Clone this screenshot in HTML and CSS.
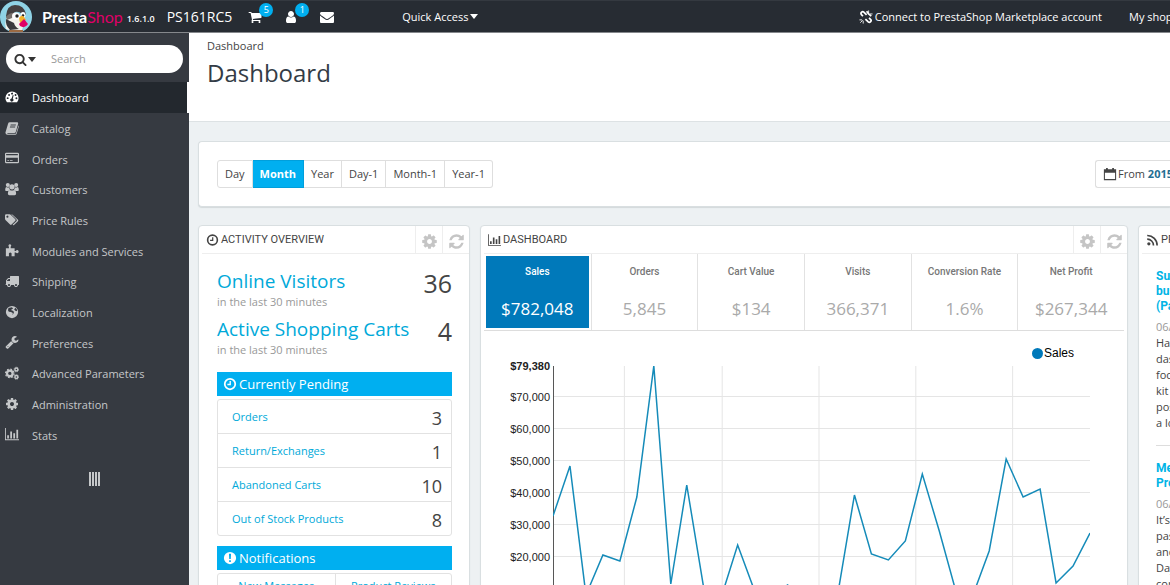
FILE: index.html
```html
<!DOCTYPE html>
<html lang="en">
<head>
<meta charset="utf-8">
<meta name="viewport" content="width=device-width, initial-scale=1">
<title>Dashboard - PrestaShop</title>
<link rel="stylesheet" href="styles.css">
</head>
<body>
<svg class="sprite" aria-hidden="true">
  <symbol id="search" viewBox="0 0 1792 1792"><path d="M1216 832q0-185-131.5-316.5t-316.5-131.5-316.5 131.5-131.5 316.5 131.5 316.5 316.5 131.5 316.5-131.5 131.5-316.5zm512 832q0 52-38 90t-90 38q-54 0-90-38l-343-342q-179 124-399 124-143 0-273.5-55.5t-225-150-150-225-55.5-273.5 55.5-273.5 150-225 225-150 273.5-55.5 273.5 55.5 225 150 150 225 55.5 273.5q0 220-124 399l343 343q37 37 37 90z"/></symbol>
  <symbol id="cog" viewBox="0 0 1792 1792"><path d="M1152 896q0-106-75-181t-181-75-181 75-75 181 75 181 181 75 181-75 75-181zm512-109v222q0 12-8 23t-20 13l-185 28q-19 54-39 91 35 50 107 138 10 12 10 25t-9 23q-27 37-99 108t-94 71q-12 0-26-9l-138-108q-44 23-91 38-16 136-29 186-7 28-36 28h-222q-14 0-24.5-8.5t-11.5-21.5l-28-184q-49-16-90-37l-141 107q-10 9-25 9-14 0-25-11-126-114-165-168-7-10-7-23 0-12 8-23 15-21 51-66.5t54-70.5q-27-50-41-99l-183-27q-13-2-21-12.5t-8-23.5v-222q0-12 8-23t19-13l186-28q14-46 39-92-40-57-107-138-10-12-10-24 0-10 9-23 26-36 98.500-107.500t94.500-71.500q13 0 26 10l138 107q44-23 91-38 16-136 29-186 7-28 36-28h222q14 0 24.500 8.500t11.500 21.500l28 184q49 16 90 37l142-107q9-9 24-9 13 0 25 10 129 119 165 170 7 8 7 22 0 12-8 23-15 21-51 66.500t-54 70.500q26 50 41 98l183 28q13 2 21 12.500t8 23.500z"/></symbol>
  <symbol id="refresh" viewBox="0 0 1792 1792"><path d="M1639 1056q0 5-1 7-64 268-268 434.500t-478 166.500q-146 0-282.500-55t-243.500-157l-129 129q-19 19-45 19t-45-19-19-45v-448q0-26 19-45t45-19h448q26 0 45 19t19 45-19 45l-137 137q71 66 161 102t187 36q134 0 250-65t186-179q11-17 53-117 8-23 30-23h192q13 0 22.500 9.500t9.500 22.500zm25-800v448q0 26-19 45t-45 19h-448q-26 0-45-19t-19-45 19-45l138-138q-148-137-349-137-134 0-250 65t-186 179q-11 17-53 117-8 23-30 23h-199q-13 0-22.500-9.500t-9.500-22.500v-7q65-268 270-434.500t480-166.500q146 0 284 55.500t245 156.500l130-129q19-19 45-19t45 19 19 45z"/></symbol>
  <symbol id="cart" viewBox="0 0 1792 1792"><path d="M704 1536q0 52-38 90t-90 38-90-38-38-90 38-90 90-38 90 38 38 90zm896 0q0 52-38 90t-90 38-90-38-38-90 38-90 90-38 90 38 38 90zm128-1088v512q0 24-16.500 42.500t-40.500 21.500l-1044 122q13 60 13 70 0 16-24 64h920q26 0 45 19t19 45-19 45-45 19h-1024q-26 0-45-19t-19-45q0-11 8-31.500t16-36 21.500-40 15.500-29.500l-177-823h-204q-26 0-45-19t-19-45 19-45 45-19h256q16 0 28.500 6.500t19.500 15.500 13 24.500 8 26 5.500 29.500 4.500 26h1201q26 0 45 19t19 45z"/></symbol>
  <symbol id="user" viewBox="0 0 1792 1792"><path d="M1536 1399q0 109-62.500 187t-150.500 78h-854q-88 0-150.500-78t-62.500-187q0-85 8.500-160.500t31.500-152 58.500-131 94-89 134.500-34.500q131 128 313 128t313-128q76 0 134.500 34.500t94 89 58.500 131 31.500 152 8.500 160.500zm-256-887q0 159-112.500 271.500t-271.500 112.500-271.500-112.500-112.500-271.500 112.500-271.500 271.500-112.500 271.500 112.500 112.500 271.500z"/></symbol>
  <symbol id="mail" viewBox="0 0 1792 1792"><path d="M1792 710v794q0 66-47 113t-113 47h-1472q-66 0-113-47t-47-113v-794q44 49 101 87 362 246 497 345 57 42 92.500 65.500t94.500 48 110 24.500h2q51 0 110-24.500t94.500-48 92.500-65.500q170-123 498-345 57-39 100-87zm0-294q0 79-49 151t-122 123q-376 261-468 325-10 7-42.500 31t-54 38.500-52 32.500-57.500 27-50 9h-2q-23 0-50-9t-57.500-27-52-32.500-54-38.500-42.500-31q-91-64-262-182.500t-205-142.500q-62-42-117-115.500t-55-136.500q0-78 41.500-130t118.500-52h1472q65 0 112.500 47t47.500 113z"/></symbol>
  <symbol id="wrench" viewBox="0 0 1792 1792"><path d="M448 1472q0-26-19-45t-45-19-45 19-19 45 19 45 45 19 45-19 19-45zm644-420l-682 682q-37 37-90 37-52 0-91-37l-106-108q-38-36-38-90 0-53 38-91l681-681q39 98 114.500 173.500t173.500 114.500zm634-435q0 39-23 106-47 134-164.500 217.500t-258.500 83.500q-185 0-316.500-131.500t-131.500-316.500 131.500-316.500 316.500-131.500q58 0 121.500 16.500t107.500 46.500q16 11 16 28t-16 28l-293 169v224l193 107q5-3 79-48.500t135.500-81 70.500-35.500q15 0 23.500 10t8.500 25z"/></symbol>
  <symbol id="truck" viewBox="0 0 1792 1792"><path d="M640 1408q0-52-38-90t-90-38-90 38-38 90 38 90 90 38 90-38 38-90zm-384-512h384v-256h-158q-13 0-22 9l-195 195q-9 9-9 22v30zm1280 512q0-52-38-90t-90-38-90 38-38 90 38 90 90 38 90-38 38-90zm256-1088v1024q0 15-4 26.500t-13.500 18.500-16.500 11.500-23.500 6-22.500 2-25.500 0-22.500-.5q0 106-75 181t-181 75-181-75-75-181h-384q0 106-75 181t-181 75-181-75-75-181h-64q-3 0-22.500.5t-25.500 0-22.500-2-23.500-6-16.500-11.500-13.500-18.500-4-26.500q0-26 19-45t45-19v-320q0-8-.5-35t0-38 2.500-34.500 6.500-37 14-30.500 22.500-30l198-198q19-19 50.500-32t58.500-13h160v-192q0-26 19-45t45-19h1024q26 0 45 19t19 45z"/></symbol>
  <symbol id="gauge" viewBox="0 0 16 16"><path fill-rule="evenodd" d="M2.200 14A7.500 7.500 0 1 1 13.800 14zM3 8.200a1.100 1.100 0 1 0 .1 2.200A1.100 1.100 0 0 0 3 8.200zM4.600 4.600a1.100 1.100 0 1 0 .1 2.200 1.100 1.100 0 0 0-.1-2.200zM8 3a1.100 1.100 0 1 0 .1 2.200A1.100 1.100 0 0 0 8 3zM12 4.700a1.100 1.100 0 1 0 .1 2.200 1.100 1.100 0 0 0-.1-2.200zM13 8.300a1.100 1.100 0 1 0 .1 2.200 1.100 1.100 0 0 0-.1-2.200zM8.900 5.700 7.500 9.600a1.800 1.800 0 1 0 1.400.4L9.900 6z"/></symbol>
  <symbol id="book" viewBox="0 0 16 16"><path fill-rule="evenodd" d="M5.500 1.500H14q1.300.2 1 1.500l-2.700 9.500q-.3 1.200-1.600 1.200H3.300q-.8 0-.9.500.2.500 1 .5h8.400q.6 0 .8-.6L15.500 5q.6.5.3 1.400l-2.500 8.200q-.3 1.200-1.600 1.200H3Q.3 15.500.5 13L3.500 3q.4-1.400 2-1.500zM6.500 4l-.3 1h6l.3-1zM5.800 6.400l-.3 1h6l.3-1z"/></symbol>
  <symbol id="card" viewBox="0 0 16 16"><path fill-rule="evenodd" d="M1.500 2h13Q16 2 16 3.500v9q0 1.500-1.500 1.500h-13Q0 14 0 12.500v-9Q0 2 1.500 2zM1.300 3.300v1.500h13.400V3.300zM1.300 7.600v5h13.400v-5zM2.700 10.500h2v1h-2zm3 0h3v1h-3z"/></symbol>
  <symbol id="group" viewBox="0 0 16 16"><circle cx="3.200" cy="3.500" r="2.300"/><circle cx="12.800" cy="3.500" r="2.300"/><circle cx="8" cy="5.500" r="3"/><path d="M.2 9.200q0-3.200 1.500-3.400 1.500 1 3 .4.200 1.800 1.200 2.800-1.500 0-2.300 1.200H1.500Q.2 10.300.2 9.200zm15.600 0q0-3.200-1.500-3.400-1.500 1-3 .4-.2 1.800-1.200 2.800 1.500 0 2.300 1.200h2.100q1.300.1 1.300-1zM3.300 13.500q0-4.500 2.400-4.500 2.300 1.500 4.600 0 2.400 0 2.400 4.500 0 1.700-1.700 1.700H5q-1.700 0-1.700-1.700z"/></symbol>
  <symbol id="tags" viewBox="0 0 16 16"><path fill-rule="evenodd" d="M0 2.800Q0 1.500 1.300 1.500h3.800q1 0 1.700.7l5 5q.8.900 0 1.700l-4.300 4.300q-.8.800-1.700 0l-5-5Q0 7.500 0 6.500zm2.700.2a1.200 1.200 0 1 0 .1 2.400A1.200 1.200 0 0 0 2.700 3z"/><path d="M7 1.500q1.300 0 2 .7l5.800 5.500q.8.900 0 1.700l-4.500 4.300q-.8.700-1.600-.2l4.500-4.500q.8-1-.2-2z"/></symbol>
  <symbol id="puzzle" viewBox="0 0 16 16"><path d="M1 6h3.500V4.500Q3.200 2.500 5 1.400q2 0 2.200 1.400Q7 3.500 6.500 4.200V6H11v3h1.200q2-1.800 3.300.1.500 2.500-1.500 2.600-1 0-1.600-.8H11V15H7.500v-2Q8 11 6 10.800 4 11 4.500 13v2H1z"/></symbol>
  <symbol id="globe" viewBox="0 0 16 16"><path fill-rule="evenodd" d="M8 1a7 7 0 1 1 0 14A7 7 0 0 1 8 1zM4 3.500 3.400 6l1 1.600 2.400.4 2.200 1-.6 2.400L9.600 10l.7-2L9 6.600 7.200 6l.3-1.200 1.700-.6L8 2.600zM10.500 5l1.300 1.500 2 .5-.2-1.800-1.800-2z"/></symbol>
  <symbol id="cogs" viewBox="0 0 16 16"><g fill="none" stroke="currentColor"><circle cx="5.500" cy="8.500" r="3.200" stroke-width="2.600"/><circle cx="5.500" cy="8.500" r="4.900" stroke-width="1.400" stroke-dasharray="2 1.850"/><circle cx="13" cy="4" r="1.700" stroke-width="1.600"/><circle cx="13" cy="12.500" r="1.700" stroke-width="1.600"/><circle cx="13" cy="4" r="2.700" stroke-width=".8" stroke-dasharray="1.200 .9"/><circle cx="13" cy="12.500" r="2.700" stroke-width=".8" stroke-dasharray="1.200 .9"/></g></symbol>
  <symbol id="bars" viewBox="0 0 16 16"><path d="M0 1h1v13h15v1H0zM2.500 9.500h2V13h-2zM6 5h2v8H6zm3.500 2h2v6h-2zM13 3h2v10h-2z"/></symbol>
  <symbol id="clock" viewBox="0 0 16 16"><path fill-rule="evenodd" d="M8 1a7 7 0 1 1 0 14A7 7 0 0 1 8 1zm0 2a5 5 0 1 0 0 10A5 5 0 0 0 8 3z"/><path d="M7.500 4.500H9v4.800H5V7.800h2.500z"/></symbol>
  <symbol id="alert" viewBox="0 0 16 16"><path fill-rule="evenodd" d="M8 1a7 7 0 1 1 0 14A7 7 0 0 1 8 1zM6.800 3.200 7.100 9h1.800l.3-5.800zM7 10.500v2h2v-2z"/></symbol>
  <symbol id="calendar" viewBox="0 0 16 16"><path fill-rule="evenodd" d="M1 2.500h2.500V1h2v1.500h5V1h2v1.500H15V15H1zm1.200 4v7.300h11.600V6.500z"/></symbol>
  <symbol id="rss" viewBox="0 0 16 16"><circle cx="3.500" cy="12.700" r="2"/><path fill="none" stroke="currentColor" stroke-width="2" d="M1.500 7a7.500 7.500 0 0 1 7.700 7.700M1.500 2.500a12 12 0 0 1 12.200 12.200"/></symbol>
  <symbol id="unlink" viewBox="0 0 16 16"><path fill="none" stroke="currentColor" stroke-width="2" d="M4.500 7 2.800 5.300Q1.700 4 2.800 2.700 4.200 1.200 5.500 2.400l3.200 3.200M11.500 9l1.900 1.900q1 1.200-.1 2.500-1.400 1.300-2.700.1L7.300 10.300M8.700 1.500 11 4.500l3 2.500"/><path fill="none" stroke="currentColor" d="M11 .5v3M15.500 4.500h-3M4.800 12.300v3.200M.5 11.300h3M4.200 11.800l-2.700 2.700"/></symbol>
</svg>

<header class="topbar">
  <svg class="logo" viewBox="0 0 32 32" role="img" aria-label="PrestaShop">
    <circle cx="16" cy="16" r="16" fill="#8fd3e6"/>
    <path fill="#f4f3ee" d="M6 28Q4 20 8 15l12-1 5 5-3 10H9z"/>
    <path fill="#454142" d="M6 15Q7 4 15 4q9 0 11 9l-2 2q-4-5-9-4l-8 6z"/>
    <path fill="#77706c" d="M6 16q4-5 10-4l-4 5-5 2z"/>
    <ellipse cx="16" cy="15" rx="4" ry="3.500" fill="#fff"/>
    <ellipse cx="23" cy="14" rx="2.500" ry="3" fill="#fff"/>
    <circle cx="17" cy="15" r="1.700" fill="#222"/>
    <circle cx="23" cy="14.500" r="1.300" fill="#222"/>
    <path fill="#f4b229" d="M19 17q3-4 5-1l2 3-6 3z"/>
    <path fill="#df0067" d="m19 23 5-5 4 5q-3 5-8 2z"/>
    <path fill="#39393d" d="m6 18 8 4q1 4 5 6l-9 1q-5-5-4-11z"/>
    <path fill="#9b6a43" d="M9 29h14v2H9z"/>
  </svg>
  <a class="brand" href="#">Presta<span class="brand-accent">Shop</span></a>
  <span class="version">1.6.1.0</span>
  <a class="shop-name" href="#">PS161RC5</a>
  <nav class="alerts" aria-label="Notifications">
    <a class="alert-link" href="#" aria-label="New orders"><svg class="icon"><use href="#cart"/></svg><span class="badge">5</span></a>
    <a class="alert-link" href="#" aria-label="New customers"><svg class="icon"><use href="#user"/></svg><span class="badge">1</span></a>
    <a class="alert-link" href="#" aria-label="Messages"><svg class="icon"><use href="#mail"/></svg></a>
  </nav>
  <button class="quick" type="button">Quick Access<span class="caret"></span></button>
  <a class="connect" href="#"><svg class="icon"><use href="#unlink"/></svg>Connect to PrestaShop Marketplace account</a>
  <a class="my-shop" href="#">My shop</a>
</header>

<div class="layout">
  <aside class="sidebar">
    <form class="search">
      <button class="search-type" type="button" aria-label="Search in"><svg class="icon"><use href="#search"/></svg><span class="caret"></span></button>
      <input class="search-input" type="text" placeholder="Search" aria-label="Search">
    </form>
    <nav class="menu" aria-label="Main">
      <a class="menu-item active" href="#"><svg class="icon"><use href="#gauge"/></svg>Dashboard</a>
      <a class="menu-item" href="#"><svg class="icon"><use href="#book"/></svg>Catalog</a>
      <a class="menu-item" href="#"><svg class="icon"><use href="#card"/></svg>Orders</a>
      <a class="menu-item" href="#"><svg class="icon"><use href="#group"/></svg>Customers</a>
      <a class="menu-item" href="#"><svg class="icon"><use href="#tags"/></svg>Price Rules</a>
      <a class="menu-item" href="#"><svg class="icon"><use href="#puzzle"/></svg>Modules and Services</a>
      <a class="menu-item" href="#"><svg class="icon"><use href="#truck"/></svg>Shipping</a>
      <a class="menu-item" href="#"><svg class="icon"><use href="#globe"/></svg>Localization</a>
      <a class="menu-item" href="#"><svg class="icon"><use href="#wrench"/></svg>Preferences</a>
      <a class="menu-item" href="#"><svg class="icon"><use href="#cogs"/></svg>Advanced Parameters</a>
      <a class="menu-item" href="#"><svg class="icon"><use href="#cog"/></svg>Administration</a>
      <a class="menu-item" href="#"><svg class="icon"><use href="#bars"/></svg>Stats</a>
    </nav>
    <button class="collapse" type="button" aria-label="Collapse menu"><svg width="11" height="14" viewBox="0 0 11 14"><path d="M0 0h2v14H0zM3 0h2v14H3zM6 0h2v14H6zM9 0h2v14H9z"/></svg></button>
  </aside>

  <main class="main">
    <div class="page-head">
      <div class="crumb">Dashboard</div>
      <h1 class="title">Dashboard</h1>
    </div>
    <div class="content">
      <section class="panel filter">
        <div class="range">
          <button class="range-btn" type="button">Day</button>
          <button class="range-btn on" type="button">Month</button>
          <button class="range-btn" type="button">Year</button>
          <button class="range-btn" type="button">Day-1</button>
          <button class="range-btn" type="button">Month-1</button>
          <button class="range-btn" type="button">Year-1</button>
        </div>
        <button class="date" type="button"><svg class="icon"><use href="#calendar"/></svg><span>From <b>2015</b></span></button>
      </section>

      <div class="columns">
        <section class="panel">
          <div class="panel-head">
            <h2 class="panel-title"><svg class="icon"><use href="#clock"/></svg>ACTIVITY OVERVIEW</h2>
            <button class="tool" type="button" aria-label="Configure"><svg class="icon"><use href="#cog"/></svg></button>
            <button class="tool" type="button" aria-label="Refresh"><svg class="icon"><use href="#refresh"/></svg></button>
          </div>
          <div class="activity">
            <div class="stat">
              <div><a class="stat-link" href="#">Online Visitors</a><div class="stat-note">in the last 30 minutes</div></div>
              <span class="stat-value">36</span>
            </div>
            <div class="stat">
              <div><a class="stat-link" href="#">Active Shopping Carts</a><div class="stat-note">in the last 30 minutes</div></div>
              <span class="stat-value">4</span>
            </div>
            <h3 class="bar"><svg class="icon"><use href="#clock"/></svg>Currently Pending</h3>
            <div class="list">
              <div class="row"><a href="#">Orders</a><span class="count">3</span></div>
              <div class="row"><a href="#">Return/Exchanges</a><span class="count">1</span></div>
              <div class="row"><a href="#">Abandoned Carts</a><span class="count">10</span></div>
              <div class="row"><a href="#">Out of Stock Products</a><span class="count">8</span></div>
            </div>
            <h3 class="bar"><svg class="icon"><use href="#alert"/></svg>Notifications</h3>
            <div class="list pair"><a href="#">New Messages</a><a href="#">Product Reviews</a></div>
          </div>
        </section>

        <section class="panel">
          <div class="panel-head">
            <h2 class="panel-title"><svg class="icon"><use href="#bars"/></svg>DASHBOARD</h2>
            <button class="tool" type="button" aria-label="Configure"><svg class="icon"><use href="#cog"/></svg></button>
            <button class="tool" type="button" aria-label="Refresh"><svg class="icon"><use href="#refresh"/></svg></button>
          </div>
          <div class="metrics">
            <button class="metric on" type="button"><span class="metric-name">Sales</span><span class="metric-value">$782,048</span></button>
            <button class="metric" type="button"><span class="metric-name">Orders</span><span class="metric-value">5,845</span></button>
            <button class="metric" type="button"><span class="metric-name">Cart Value</span><span class="metric-value">$134</span></button>
            <button class="metric" type="button"><span class="metric-name">Visits</span><span class="metric-value">366,371</span></button>
            <button class="metric" type="button"><span class="metric-name">Conversion Rate</span><span class="metric-value">1.6%</span></button>
            <button class="metric" type="button"><span class="metric-name">Net Profit</span><span class="metric-value">$267,344</span></button>
          </div>
          <div class="legend"><span class="dot"></span>Sales</div>
          <div class="chart">
            <div class="ticks"><b>$79,380</b><span>$70,000</span><span>$60,000</span><span>$50,000</span><span>$40,000</span><span>$30,000</span><span>$20,000</span><span>$10,000</span></div>
            <svg class="plot" viewBox="0 0 538 256" preserveAspectRatio="none" role="img" aria-label="Sales by day">
              <path class="grid" d="M0 30.500h538M0 62.500h538M0 94.500h538M0 126.500h538M0 158.500h538M0 190.500h538M0 222.500h538M71.500 0v256M169.500 0v256M266.500 0v256M363.500 0v256M460.500 0v256"/>
              <path class="axis" d="M.5 0v256"/>
              <path class="line" d="M0 150 17 100 33 229 50 189 67 195 84 131 101 0 118 218 134 119 151 222 168 233 185 179 202 225 219 230 235 219 252 231 269 234 286 224 302 129 319 188 336 194 353 175 370 108 387 165 403 223 420 231 437 185 454 93 471 131 488 123 504 217 521 200 538 167"/>
            </svg>
          </div>
        </section>

        <section class="panel news">
          <div class="panel-head"><h2 class="panel-title"><svg class="icon"><use href="#rss"/></svg>PRESTASHOP</h2></div>
          <article class="post">
            <a class="post-title" href="#">Support<br>business<br>(Part</a>
            <div class="post-date">06/</div>
            <p class="post-text">Have<br>dashboard<br>focus<br>kit<br>possible<br>a look</p>
          </article>
          <article class="post">
            <a class="post-title" href="#">Meet<br>PrestaShop</a>
            <div class="post-date">06/</div>
            <p class="post-text">It’s<br>past<br>and<br>Day<br>commerce</p>
          </article>
        </section>
      </div>
    </div>
  </main>
</div>
</body>
</html>
```

FILE: styles.css
```css
* { box-sizing: border-box; }
html { overflow: hidden; }
body {
  margin: 0;
  height: 100vh;
  overflow: hidden;
  display: flex;
  flex-direction: column;
  font: 11px/16px "Open Sans", "Noto Sans", sans-serif;
  color: #444;
  background: #edf1f3;
}
a { color: inherit; text-decoration: none; }
button { font: inherit; color: inherit; background: none; border: 0; padding: 0; white-space: nowrap; cursor: pointer; }
h1, h2, h3, p { margin: 0; font-weight: 400; }
.sprite { position: absolute; width: 0; height: 0; }
.icon { width: 14px; height: 14px; fill: currentColor; flex: none; }
.caret { border: 4px solid transparent; border-top: 5px solid currentColor; border-bottom: 0; }

/* Top bar */
.topbar {
  flex: none;
  display: flex;
  align-items: center;
  height: 33px;
  color: #fff;
  background: #272c33;
  border-top: 1px solid #343940;
  border-bottom: 1px solid #85888c;
  white-space: nowrap;
  overflow: hidden;
}
.logo { width: 32px; height: 32px; flex: none; }
.brand { margin-left: 10px; font: 16px/20px Lato, "Open Sans", sans-serif; font-weight: 700; }
.brand-accent { color: #df0067; font-weight: 400; }
.version { margin: 4px 0 0 4px; font-size: 9px; font-weight: 600; }
.shop-name { margin-left: 12px; font-size: 14px; }
.alerts { display: flex; gap: 22px; margin-left: 16px; }
.alert-link { position: relative; display: flex; }
.badge {
  position: absolute;
  left: 11px;
  top: -7px;
  width: 14px;
  height: 14px;
  border-radius: 50%;
  background: #00aff0;
  font-size: 9px;
  line-height: 14px;
  text-align: center;
}
.quick { display: flex; align-items: center; gap: 2px; margin-left: 68px; }
.connect { display: flex; align-items: center; gap: 2px; margin-left: auto; }
.my-shop { flex: none; width: 41px; margin-left: 27px; overflow: hidden; }

/* Sidebar */
.layout { flex: 1; display: flex; min-height: 0; }
.sidebar { flex: none; width: 189px; color: #c5c7c9; background: #363a41; }
.search { display: flex; align-items: center; height: 28px; margin: 12px 6px 9px; padding: 0 8px; border-radius: 14px; background: #fff; }
.search-type { display: flex; align-items: center; gap: 1px; color: #333; }
.search-type .icon { width: 13px; height: 13px; }
.search-input { flex: 1; min-width: 0; margin-left: 15px; padding: 0; border: 0; outline: 0; background: none; font: inherit; }
.search-input::placeholder { color: #999; opacity: 1; }
.menu { display: flex; flex-direction: column; height: 368px; }
.menu-item { flex: 1; display: flex; align-items: center; gap: 13px; padding: 2px 0 0 5px; }
.menu-item .icon { margin-bottom: 3px; }
.menu-item.active { color: #fff; background: #23282e; border-right: 2px solid #fff; }
.collapse { display: block; margin: 22px auto 0; fill: #c5c7c9; }

/* Page head */
.main { flex: 1; min-width: 0; }
.page-head { height: 89px; padding: 5px 18px; background: #fff; border-bottom: 1px solid #dde2e4; }
.title { margin-top: 2px; font-size: 24px; line-height: 34px; color: #333c46; }
.content { padding: 19px 0 0 9px; }

/* Panels */
.panel { background: #fff; border: 1px solid #d9dfe1; border-radius: 4px; box-shadow: 0 1px 1px #d3d9db; }
.filter { display: flex; align-items: center; justify-content: space-between; height: 66px; padding-left: 18px; border-right: 0; border-radius: 4px 0 0 4px; }
.range { display: flex; }
.range-btn { height: 28px; padding: 0 7px; border: 1px solid #dedede; border-left-width: 0; }
.range-btn:first-child { border-left-width: 1px; border-radius: 3px 0 0 3px; }
.range-btn:last-child { border-radius: 0 3px 3px 0; }
.range-btn.on { color: #fff; font-weight: 700; background: #00aff0; border-color: #009fdc; }
.date { display: flex; align-items: center; gap: 1px; width: 75px; height: 28px; padding-left: 7px; border: 1px solid #dedede; border-right: 0; border-radius: 3px 0 0 3px; overflow: hidden; }
.date b { color: #246e92; }
.columns { display: grid; grid-template-columns: 272px minmax(0, 1fr) 32px; gap: 10px; margin-top: 18px; }
.panel-head { display: flex; height: 28px; margin-left: 3px; border-bottom: 1px solid #eee; }
.panel-title { flex: 1; display: flex; align-items: center; gap: 2px; padding: 1px 0 0 4px; font: 11px/16px Roboto, "Open Sans", sans-serif; }
.panel-title .icon { width: 13px; }
.tool { display: flex; align-items: center; justify-content: center; width: 27px; color: #c5c5c5; border-left: 1px solid #eee; padding-top: 3px; }
.tool .icon { width: 17px; height: 17px; }

/* Activity */
.activity { padding: 14px 17px 0 18px; }
.stat { display: flex; justify-content: space-between; height: 48px; }
.stat-link { display: block; font-size: 19px; line-height: 26px; color: #00a9d9; white-space: nowrap; }
.stat-note { font-size: 11px; line-height: 16px; color: #999; }
.stat-value { font-size: 25px; line-height: 30px; }
.bar { display: flex; align-items: center; gap: 2px; height: 24px; margin-top: 8px; padding-left: 6px; font-size: 13px; color: #fff; background: #00aff0; }
.list { margin: 3px 0 10px; border: 1px solid #e2e2e2; border-radius: 3px; color: #00a9d9; }
.row { display: flex; justify-content: space-between; height: 34px; padding: 0 9px 0 14px; line-height: 34px; border-bottom: 1px solid #e2e2e2; }
.row:last-child { height: 33px; border-bottom: 0; }
.count { font-size: 18px; line-height: 36px; color: #444; }
.pair { display: grid; grid-template-columns: 1fr 1fr; line-height: 24px; text-align: center; }
.pair a + a { border-left: 1px solid #e2e2e2; }

/* Metrics */
.metrics { display: grid; grid-template-columns: repeat(6, 1fr); height: 77px; margin: 0 3px; border-bottom: 1px solid #ddd; }
.metric { display: flex; flex-direction: column; align-items: center; padding-top: 10px; border-left: 1px solid #e2e2e2; color: #aaa; }
.metric-name { font: 10px/16px Roboto, "Open Sans", sans-serif; font-weight: 500; color: #777; }
.metric-value { margin-top: 17px; font-size: 17px; line-height: 24px; }
.metric.on { margin: 2px; padding-top: 8px; border: 0; background: #0079ba; color: #fff; }
.metric.on .metric-name { color: #fff; }

/* Chart */
.legend { display: flex; align-items: center; justify-content: flex-end; gap: 1px; height: 16px; margin: 14px 53px 0 0; font: 12px/16px "Liberation Sans", Arial, sans-serif; color: #000; }
.dot { width: 11px; height: 11px; border-radius: 50%; background: #0079ba; }
.chart { display: grid; grid-template-columns: 69px minmax(0, 1fr); gap: 3px; margin: 5px 37px 0 0; }
.ticks { display: flex; flex-direction: column; font: 11px/16px "Liberation Sans", Arial, sans-serif; color: #222; text-align: right; }
.ticks > * { height: 32px; line-height: 1px; white-space: nowrap; }
.ticks > :first-child { height: 31px; }
.plot { display: block; width: 100%; height: 256px; }
.grid, .axis, .line { fill: none; vector-effect: non-scaling-stroke; }
.grid { stroke: #e5e5e5; }
.axis { stroke: #555; }
.line { stroke: #158bb9; stroke-width: 1.5px; }

/* News */
.news { overflow: hidden; border-right: 0; border-radius: 4px 0 0 4px; white-space: nowrap; }
.post { margin-left: 17px; padding: 15px 0 14px; border-bottom: 1px solid #ddd; }
.post-title { display: block; font: 12px/15px Roboto, "Open Sans", sans-serif; font-weight: 700; color: #00b4e6; }
.post-date { margin-top: 5px; color: #999; }
```
